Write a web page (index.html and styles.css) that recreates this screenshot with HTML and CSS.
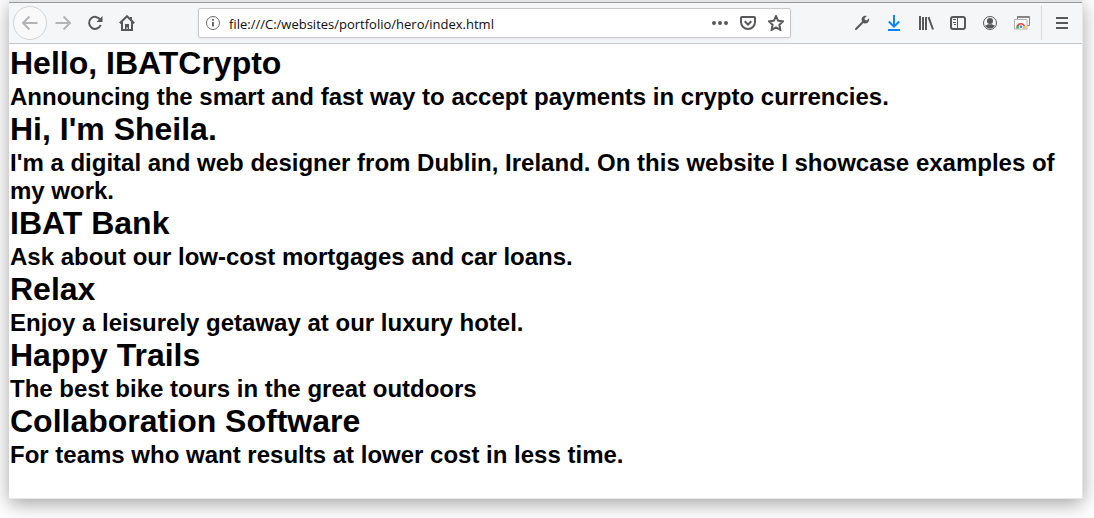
FILE: index.html
```html
<!DOCTYPE html>
<html lang="en">
<head>
<meta charset="utf-8">
<meta name="viewport" content="width=device-width, initial-scale=1">
<title>Hero</title>
<link rel="stylesheet" href="styles.css">
</head>
<body>
<div class="window">
  <header class="toolbar">
    <nav class="nav-buttons" aria-label="Navigation">
      <button class="tool back" type="button" aria-label="Back"><svg class="icon" viewBox="0 0 16 16"><path d="M15.500 8H1.500M7.500 1.500L1 8l6.500 6.500"/></svg></button>
      <button class="tool forward" type="button" aria-label="Forward"><svg class="icon" viewBox="0 0 16 16"><path d="M.5 8h14M8.500 1.500L15 8l-6.500 6.500"/></svg></button>
      <button class="tool" type="button" aria-label="Reload"><svg class="icon" viewBox="0 0 16 16"><path d="M13.200 4.700A6 6 0 1 0 13.700 10"/><path class="solid" d="M15.500 1v6h-6z"/></svg></button>
      <button class="tool" type="button" aria-label="Home"><svg class="icon" viewBox="0 0 16 16"><path d="M.8 8.300L8 1.200l7.200 7.100M3 7v8h10V7M12 2v3"/><path class="solid" d="M6 9h4v6H8.800v-2.500H7.500V15H6z"/></svg></button>
    </nav>
    <div class="address">
      <svg class="icon info" viewBox="0 0 16 16"><circle cx="8" cy="8" r="6.500"/><path class="thick" d="M8 7v4.500M8 4v1.800"/></svg>
      <input class="url" type="text" aria-label="Address" value="file:///C:/websites/portfolio/hero/index.html">
      <button class="mini" type="button" aria-label="Page actions"><svg class="icon" viewBox="0 0 16 16"><g class="solid"><circle cx="2" cy="8" r="2"/><circle cx="8" cy="8" r="2"/><circle cx="14" cy="8" r="2"/></g></svg></button>
      <button class="mini" type="button" aria-label="Save to Pocket"><svg class="icon" viewBox="0 0 16 16"><path d="M1.900 2h12.200q.9 0 .9.900V7a7 7 0 0 1-14 0V2.900Q1 2 1.900 2z"/><path d="M4.700 6.300L8 9.500l3.300-3.200"/></svg></button>
      <button class="mini" type="button" aria-label="Bookmark"><svg class="icon" viewBox="0 0 16 16"><path d="M8 1.200l2.100 4.500 4.900.7-3.600 3.400.9 5L8 12.400l-4.300 2.400.9-5L1 6.400l4.900-.7z"/></svg></button>
    </div>
    <div class="extras">
      <button class="tool" type="button" aria-label="Developer tools"><svg class="icon" viewBox="0 0 16 16"><path class="thick" stroke-linecap="round" d="M2 14L9 7"/><path class="solid" d="M12.800 1L10.500 3.300l.5 1.700 1.700.5L15 3.200c.8 3-1.500 6-5 5L7.800 6c-1-3.500 2-6 5-5z"/></svg></button>
      <button class="tool download" type="button" aria-label="Downloads"><svg class="icon" viewBox="0 0 16 16"><path d="M8 0v12M2.800 6.500L8 11.700l5.200-5.200M2 15h12"/></svg></button>
      <button class="tool" type="button" aria-label="Library"><svg class="icon" viewBox="0 0 16 16"><path d="M2 1v14M5 2v13M8 2v13M10.500 2.200L15 14.500"/></svg></button>
      <button class="tool" type="button" aria-label="Sidebar"><svg class="icon" viewBox="0 0 16 16"><rect x="1" y="2" width="14" height="12" rx="2"/><path class="fine" d="M7.500 2v12M3 4.500h3M3 7.500h3M4 9.500h2"/></svg></button>
      <button class="tool" type="button" aria-label="Account"><svg class="icon" viewBox="0 0 16 16"><circle class="fine" cx="8" cy="8" r="6.500"/><circle class="solid" cx="8" cy="6" r="3"/><path class="solid" d="M3 10.500q2.500-.5 3-1.200h4q.5.700 3 1.200-1.500 3-5 3t-5-3z"/></svg></button>
      <button class="tool" type="button" aria-label="Open in Chrome"><svg class="icon" viewBox="0 0 16 16"><path class="pane" d="M3.500 1.500h12v9h-12z"/><path class="pane-bar" d="M3 2h12.500"/><path class="pane front" d="M.5 4.500h12.500V14H.5z"/><path class="red" d="M2.500 11a4.600 4.600 0 0 1 8.700 0L7 11.500z"/><path class="green" d="M2.300 10.800L5.500 11v2.500H2.300z"/><path class="yellow" d="M8.500 10.800h3v2.700h-3z"/><circle class="blue" cx="7" cy="11.800" r="1.900"/></svg></button>
      <button class="tool menu" type="button" aria-label="Menu"><svg class="icon" viewBox="0 0 16 16"><path d="M2 3h12M2 8h12M2 13h12"/></svg></button>
    </div>
  </header>
  <main class="page">
    <h1>Hello, IBATCrypto</h1>
    <h2>Announcing the smart and fast way to accept payments in crypto currencies.</h2>
    <h1>Hi, I'm Sheila.</h1>
    <h2>I'm a digital and web designer from Dublin, Ireland. On this website I showcase examples of my work.</h2>
    <h1>IBAT Bank</h1>
    <h2>Ask about our low-cost mortgages and car loans.</h2>
    <h1>Relax</h1>
    <h2>Enjoy a leisurely getaway at our luxury hotel.</h2>
    <h1>Happy Trails</h1>
    <h2>The best bike tours in the great outdoors</h2>
    <h1>Collaboration Software</h1>
    <h2>For teams who want results at lower cost in less time.</h2>
  </main>
</div>
</body>
</html>
```
FILE: styles.css
```css
* {
  box-sizing: border-box;
  margin: 0;
  padding: 0;
}

body {
  background: #fff;
  overflow: hidden;
  font-family: "Liberation Sans", Arial, sans-serif;
}

.window {
  margin: 0 11px 19px 9px;
  background: #fff;
  border: solid #e8e8e8;
  border-width: 0 1px 1px 0;
  box-shadow: 0 5px 18px rgba(0, 0, 0, 0.36);
}

.toolbar {
  display: flex;
  align-items: center;
  height: 44px;
  border-top: 2px solid #e3e4e6;
  border-bottom: 1px solid #c8c8ca;
  background: #f5f6f8;
  box-shadow: inset 0 1px #98999b;
  padding: 1px 0 0 4px;
}

.nav-buttons,
.extras {
  display: flex;
  align-items: center;
}

.tool,
.mini {
  display: flex;
  align-items: center;
  justify-content: center;
  border: 0;
  background: none;
  color: #58585a;
}

.tool {
  width: 32px;
  height: 34px;
}

.nav-buttons .back {
  width: 34px;
  border: 1px solid #d2d3d5;
  border-radius: 50%;
  background: #f9f9fa;
}

.back,
.forward {
  color: #b4b4b6;
}

.download {
  color: #0a84ff;
}

.extras .menu {
  width: 41px;
  margin-left: 3px;
  border-left: 1px solid #d7d8da;
}

.mini {
  width: 28px;
  height: 28px;
}

.icon {
  width: 16px;
  height: 16px;
  flex: none;
  fill: none;
  stroke: currentColor;
  stroke-width: 2;
}

.solid {
  fill: currentColor;
  stroke: none;
}

.fine {
  stroke-width: 1;
}

.info {
  color: #6b6b6d;
  stroke-width: 1;
}

.thick {
  stroke-width: 2;
}

.address {
  display: flex;
  align-items: center;
  flex: 1;
  height: 30px;
  margin: 0 55px;
  padding: 0 0 0 6px;
  border: 1px solid #c8c8ca;
  border-radius: 2px;
  background: #fff;
  box-shadow: 0 1px 3px rgba(0, 0, 0, 0.06);
}

.url {
  flex: 1;
  min-width: 0;
  height: 28px;
  padding: 2px 0 0 8px;
  border: 0;
  outline: 0;
  background: none;
  color: #0c0c0d;
  font: 13px "Open Sans", "Noto Sans", sans-serif;
}

.pane {
  fill: #fff;
  stroke: #858585;
  stroke-width: 1;
}

.pane-bar {
  stroke: #858585;
  stroke-width: 2;
}

.front {
  stroke: #b0b0b0;
}

.red {
  fill: #e8453c;
  stroke: none;
}

.green {
  fill: #3aa757;
  stroke: none;
}

.yellow {
  fill: #f9bb2d;
  stroke: none;
}

.blue {
  fill: #4587f3;
  stroke: #fff;
  stroke-width: 1;
}

.page {
  padding: 1px 1px 29px;
  color: #000;
}

h1 {
  margin-bottom: 2px;
  font-size: 32px;
  line-height: 36px;
}

h2 {
  font-size: 24px;
  line-height: 28px;
}
```
